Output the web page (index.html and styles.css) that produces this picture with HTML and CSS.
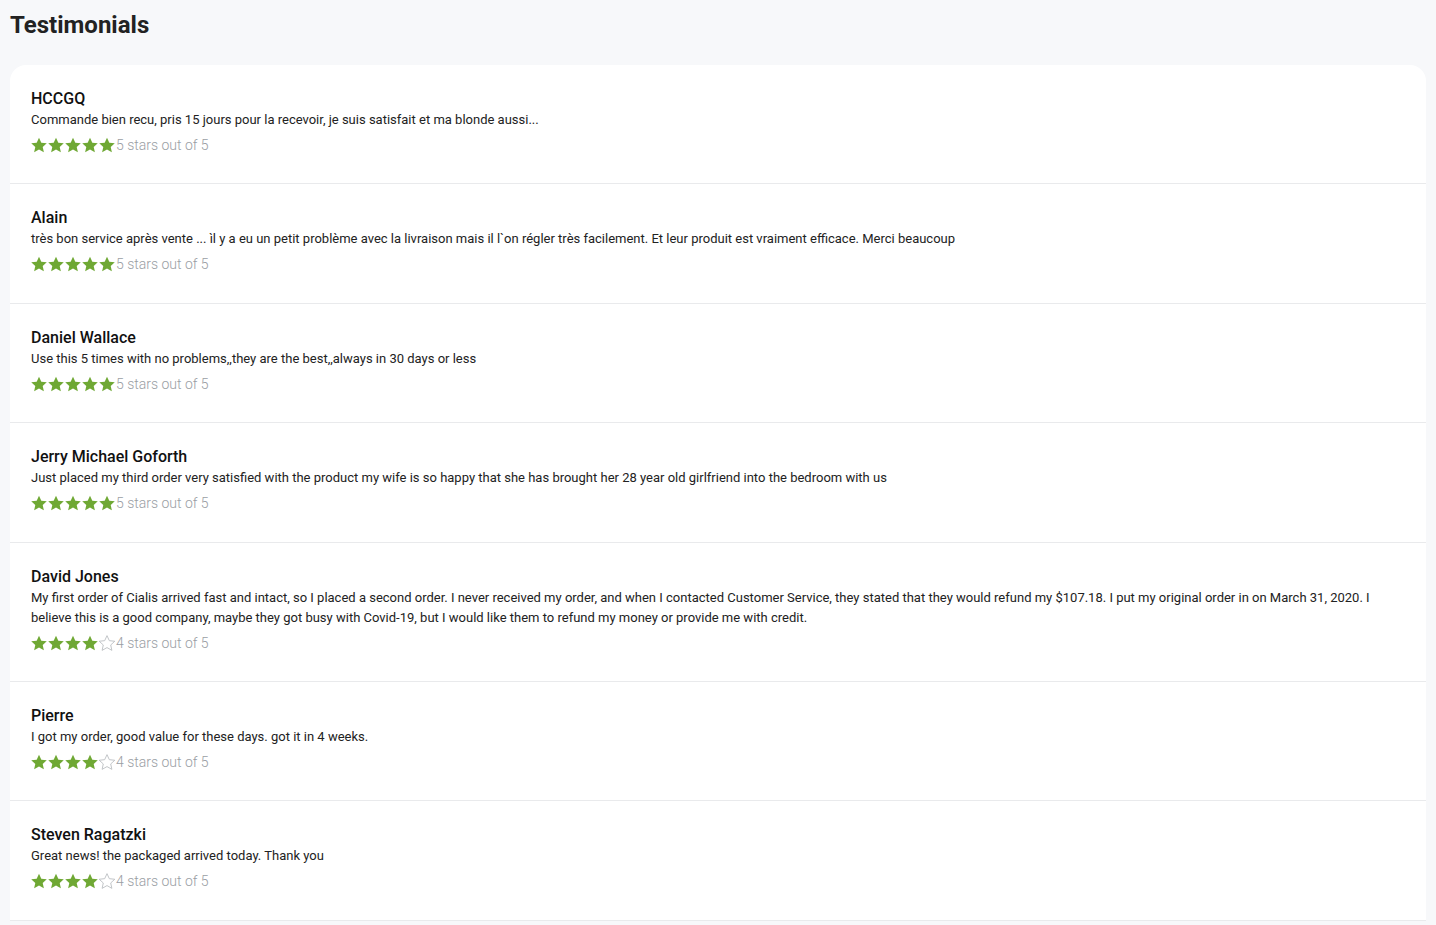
FILE: index.html
```html
<!DOCTYPE html>
<html>
<head>
<meta charset="utf-8">
<link rel="stylesheet" href="styles.css">
</head>
<body>
<svg width="0" height="0" class="defs">
  <defs>
    <symbol id="star" viewBox="1 1.2 22 21"><path d="M12 1.6l3.2 6.9 7.5.8-5.6 5.1 1.6 7.4L12 18l-6.7 3.8 1.6-7.4-5.6-5.1 7.5-.8z"/></symbol>
  </defs>
</svg>
<h1 class="title">Testimonials</h1>
<div class="card">
  <div class="item">
    <div class="name">HCCGQ</div>
    <div class="text">Commande bien recu, pris 15 jours pour la recevoir, je suis satisfait et ma blonde aussi...</div>
    <div class="rating"><span class="stars"><svg class="s on"><use href="#star"/></svg><svg class="s on"><use href="#star"/></svg><svg class="s on"><use href="#star"/></svg><svg class="s on"><use href="#star"/></svg><svg class="s on"><use href="#star"/></svg></span><span class="label">5 stars out of 5</span></div>
  </div>
  <div class="item">
    <div class="name">Alain</div>
    <div class="text">très bon service après vente ... ìl y a eu un petit problème avec la livraison mais il l`on régler très facilement. Et leur produit est vraiment efficace. Merci beaucoup</div>
    <div class="rating"><span class="stars"><svg class="s on"><use href="#star"/></svg><svg class="s on"><use href="#star"/></svg><svg class="s on"><use href="#star"/></svg><svg class="s on"><use href="#star"/></svg><svg class="s on"><use href="#star"/></svg></span><span class="label">5 stars out of 5</span></div>
  </div>
  <div class="item">
    <div class="name">Daniel Wallace</div>
    <div class="text">Use this 5 times with no problems,,they are the best,,always in 30 days or less</div>
    <div class="rating"><span class="stars"><svg class="s on"><use href="#star"/></svg><svg class="s on"><use href="#star"/></svg><svg class="s on"><use href="#star"/></svg><svg class="s on"><use href="#star"/></svg><svg class="s on"><use href="#star"/></svg></span><span class="label">5 stars out of 5</span></div>
  </div>
  <div class="item">
    <div class="name">Jerry Michael Goforth</div>
    <div class="text">Just placed my third order very satisfied with the product my wife is so happy that she has brought her 28 year old girlfriend into the bedroom with us</div>
    <div class="rating"><span class="stars"><svg class="s on"><use href="#star"/></svg><svg class="s on"><use href="#star"/></svg><svg class="s on"><use href="#star"/></svg><svg class="s on"><use href="#star"/></svg><svg class="s on"><use href="#star"/></svg></span><span class="label">5 stars out of 5</span></div>
  </div>
  <div class="item">
    <div class="name">David Jones</div>
    <div class="text">My first order of Cialis arrived fast and intact, so I placed a second order. I never received my order, and when I contacted Customer Service, they stated that they would refund my $107.18. I put my original order in on March 31, 2020. I believe this is a good company, maybe they got busy with Covid-19, but I would like them to refund my money or provide me with credit.</div>
    <div class="rating"><span class="stars"><svg class="s on"><use href="#star"/></svg><svg class="s on"><use href="#star"/></svg><svg class="s on"><use href="#star"/></svg><svg class="s on"><use href="#star"/></svg><svg class="s off"><use href="#star"/></svg></span><span class="label">4 stars out of 5</span></div>
  </div>
  <div class="item">
    <div class="name">Pierre</div>
    <div class="text">I got my order, good value for these days. got it in 4 weeks.</div>
    <div class="rating"><span class="stars"><svg class="s on"><use href="#star"/></svg><svg class="s on"><use href="#star"/></svg><svg class="s on"><use href="#star"/></svg><svg class="s on"><use href="#star"/></svg><svg class="s off"><use href="#star"/></svg></span><span class="label">4 stars out of 5</span></div>
  </div>
  <div class="item">
    <div class="name">Steven Ragatzki</div>
    <div class="text">Great news! the packaged arrived today. Thank you</div>
    <div class="rating"><span class="stars"><svg class="s on"><use href="#star"/></svg><svg class="s on"><use href="#star"/></svg><svg class="s on"><use href="#star"/></svg><svg class="s on"><use href="#star"/></svg><svg class="s off"><use href="#star"/></svg></span><span class="label">4 stars out of 5</span></div>
  </div>
</div>
</body>
</html>
```
FILE: styles.css
```css
html, body {
  margin: 0;
  padding: 0;
}
body {
  background: #f7f8fa;
  font-family: Roboto, "Liberation Sans", sans-serif;
  color: #1f1f1f;
  padding: 0 10px;
}
.defs {
  position: absolute;
  width: 0;
  height: 0;
}
.title {
  margin: 0;
  padding-top: 11px;
  height: 65px;
  box-sizing: border-box;
  font-size: 24px;
  font-weight: 700;
  line-height: 28px;
  color: #222;
}
.card {
  background: #fff;
  border-radius: 16px 16px 0 0;
}
.item {
  padding: 23px 20px 29.4px 21px;
  border-bottom: 1px solid #e9eaec;
}
.name {
  font-size: 16px;
  font-weight: 500;
  line-height: 21px;
  color: #111;
}
.text {
  font-size: 13px;
  line-height: 20px;
  margin-top: 1px;
  color: #222;
}
.rating {
  display: flex;
  align-items: center;
  margin-top: 6px;
  height: 18px;
}
.stars {
  display: flex;
  gap: 1px;
}
.s {
  width: 16px;
  height: 16px;
}
.s.on {
  fill: #6fa834;
}
.s.off {
  fill: none;
  stroke: #b9bcc0;
  stroke-width: 1.2;
}
.label {
  font-size: 14px;
  font-weight: 300;
  color: #9a9ea4;
  margin-left: 1px;
}
```
